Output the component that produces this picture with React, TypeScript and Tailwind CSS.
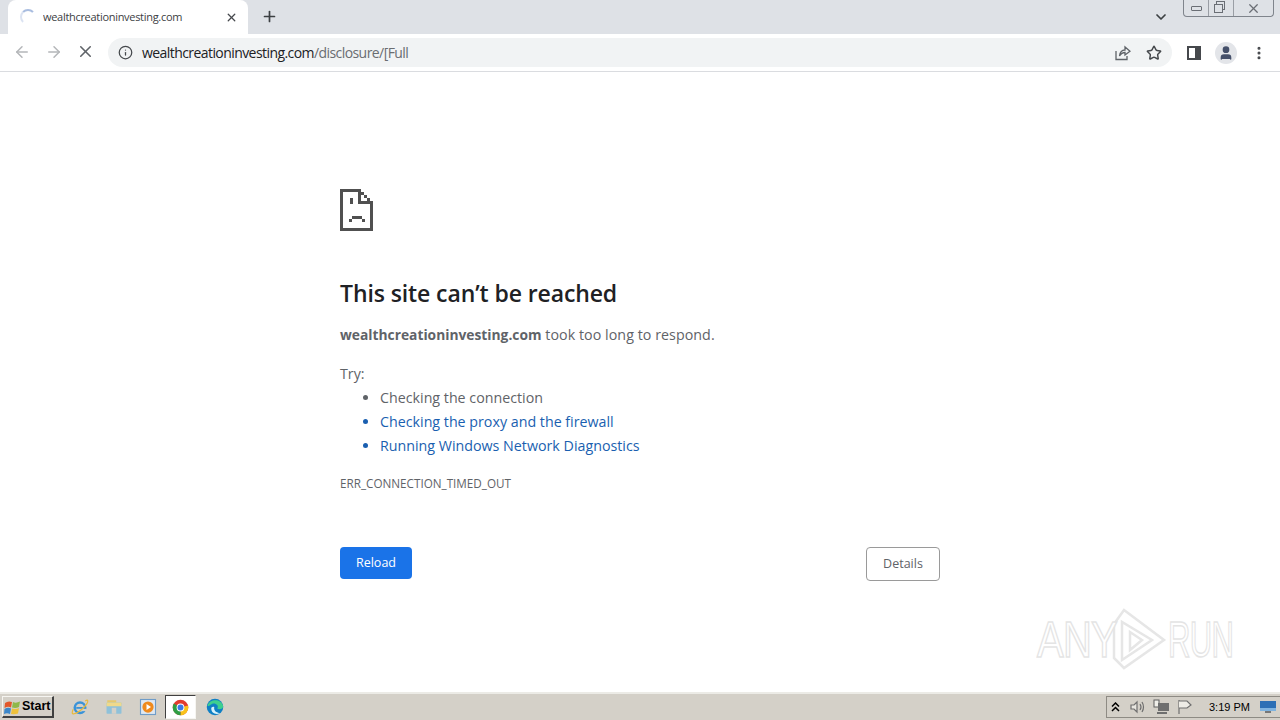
import { ArrowLeft, ArrowRight, X, Plus, ChevronDown, Info, Star, MoreVertical, User } from "lucide-react";

const FONT = "font-['Open_Sans','Noto_Sans',sans-serif]";

function SadPage() {
  return (
    <svg width="33" height="42" viewBox="0 0 33 42" fill="#505050" shapeRendering="crispEdges">
      <rect x="0" y="0" width="21" height="3" />
      <rect x="0" y="0" width="3" height="42" />
      <rect x="0" y="39" width="33" height="3" />
      <rect x="30" y="12" width="3" height="30" />
      <rect x="18" y="0" width="3" height="15" />
      <rect x="18" y="12" width="15" height="3" />
      <rect x="21" y="3" width="3" height="3" />
      <rect x="24" y="6" width="3" height="3" />
      <rect x="27" y="9" width="3" height="3" />
      <rect x="10" y="9" width="3" height="6" />
      <rect x="12" y="27" width="10" height="3" />
      <rect x="9" y="30" width="3" height="3" />
      <rect x="22" y="30" width="3" height="3" />
    </svg>
  );
}

function ShareIcon() {
  return (
    <svg width="17" height="16" viewBox="0 0 17 16" fill="none" stroke="#5f6368" strokeWidth="1.3">
      <path d="M2 6 V14.5 H13 V11" />
      <path d="M5.5 11 C6 7 8.5 5 11 5 V2 L16 6.2 L11 10 V7.5 C9 7.5 7 8.5 5.5 11 Z" />
    </svg>
  );
}

function ChromeIcon({ size = 18 }: { size?: number }) {
  return (
    <svg width={size} height={size} viewBox="0 0 24 24">
      <circle cx="12" cy="12" r="11" fill="#e33b2e" />
      <path d="M12 12 L22.5 9 A11 11 0 0 1 12 23 Z" fill="#f9c21a" />
      <path d="M12 12 L12 23 A11 11 0 0 1 2.5 6.5 Z" fill="#2f9e44" />
      <circle cx="12" cy="12" r="5.5" fill="#fff" />
      <circle cx="12" cy="12" r="4.2" fill="#3b78e7" />
    </svg>
  );
}

function EdgeIcon() {
  return (
    <svg width="18" height="18" viewBox="0 0 24 24">
      <circle cx="12" cy="12" r="11" fill="#0f7fc4" />
      <path d="M2 10 C5 1 20 0 23 11 C23 15 17 16 15 14 C18 10 12 6 8 8 C4 10 3 12 2 10 Z" fill="#3ecf8e" />
      <path d="M7 14 C7 20 13 23 19 20 C14 20 10 17 11 12 C9 11 7 12 7 14 Z" fill="#d8f2fb" />
    </svg>
  );
}

function IeIcon() {
  return (
    <svg width="18" height="18" viewBox="0 0 24 24" fill="none">
      <circle cx="12" cy="13" r="7" stroke="#3a93d8" strokeWidth="3.4" />
      <rect x="7" y="12" width="10" height="2.4" fill="#3a93d8" />
      <rect x="15" y="14.5" width="6" height="3" fill="#d4d0c8" />
      <path d="M19 4 C22 2 23 3 22 6 C20 11 10 20 4 21 C1 22 1 19 3 15" stroke="#e8b93a" strokeWidth="1.6" />
    </svg>
  );
}

function FolderIcon() {
  return (
    <svg width="18" height="18" viewBox="0 0 24 24">
      <rect x="3" y="3" width="12" height="5" fill="#e6c86e" />
      <rect x="2" y="6" width="20" height="15" rx="1" fill="#8fc1d9" />
      <rect x="2" y="6" width="20" height="5" fill="#f0d98a" />
      <rect x="9" y="13" width="6" height="8" fill="#d4d0c8" />
    </svg>
  );
}

function MediaIcon() {
  return (
    <svg width="18" height="18" viewBox="0 0 24 24">
      <rect x="2" y="2" width="20" height="20" fill="#dfe8f2" stroke="#6f9cc8" strokeWidth="1.5" />
      <circle cx="12" cy="12" r="7.5" fill="#ef8a1d" />
      <path d="M10 8 L16 12 L10 16 Z" fill="#fff" />
    </svg>
  );
}

function StartFlag() {
  return (
    <svg width="17" height="16" viewBox="0 0 17 16">
      <path d="M1 4 Q4 1.5 8 3 L7 8.5 Q4 7 0.5 9 Z" fill="#e2572b" />
      <path d="M9 3 Q12 4.5 16 2.5 L15 8 Q12 9.5 8 8.5 Z" fill="#8fb84a" />
      <path d="M0.5 10 Q4 8 7 9.5 L6 15 Q3 13.5 0 15 Z" fill="#3b86c9" />
      <path d="M8 9.5 Q12 10.5 15 9 L14 14.5 Q11 15.5 7 15 Z" fill="#eec13a" />
    </svg>
  );
}

function Watermark() {
  return (
    <div className="absolute left-[1037px] top-[608px] flex items-center pointer-events-none select-none">
      <span className="font-['Liberation_Sans',sans-serif] text-[50px] leading-none scale-x-[0.8] origin-left w-[71px] text-white [-webkit-text-stroke:1.5px_#e4e4e4] tracking-[-1px]">ANY</span>
      <svg width="60" height="64" viewBox="0 0 60 64" fill="none" stroke="#e6e6e6" strokeWidth="2.5">
        <path d="M6 16 L16 2 L56 32 L16 60 L6 50 Z" />
        <path d="M14 14 L14 52 L44 32 Z" />
        <path d="M22 24 L22 42 L34 32 Z" />
      </svg>
      <span className="font-['Liberation_Sans',sans-serif] text-[50px] leading-none scale-x-[0.62] origin-left w-[66px] text-white [-webkit-text-stroke:1.5px_#e4e4e4] tracking-[-1px]">RUN</span>
    </div>
  );
}

export default function App() {
  return (
    <div className={`relative w-[1280px] h-[720px] overflow-hidden flex flex-col bg-white ${FONT}`}>
      {/* Tab strip */}
      <div className="h-[34px] bg-[#dee1e6] flex items-end pl-2 relative shrink-0">
        <div className="w-[240px] h-[34px] bg-white rounded-t-lg flex items-center pl-[12px] pr-[10px]">
          <div className="w-[16px] h-[16px] rounded-full border-2 border-transparent border-t-[#a9bde0] border-l-[#dbe3f2]" />
          <span className="ml-[7px] text-[11px] tracking-[-0.3px] text-[#3c4043] flex-1 truncate">wealthcreationinvesting.com</span>
          <X size={13} strokeWidth={2.4} className="text-[#45484c]" />
        </div>
        <div className="h-[34px] flex items-center ml-[13px]">
          <Plus size={17} strokeWidth={2.4} className="text-[#3c4043] mb-[2px]" />
        </div>
        <ChevronDown size={16} strokeWidth={2.6} className="absolute left-[1153px] top-[9px] text-[#3c4043]" />
        {/* Window controls */}
        <div className="absolute left-[1183px] top-0 w-[91px] h-[17px] flex border border-t-0 border-[#7f848c] rounded-b-[4px] text-[#6a6e75]">
          <div className="w-[25px] flex items-center justify-center border-r border-[#9a9ea5]">
            <div className="w-[11px] h-[5px] border border-[#6a6e75] rounded-[1px]" />
          </div>
          <div className="w-[25px] flex items-center justify-center border-r border-[#9a9ea5] relative">
            <div className="w-[9px] h-[9px] border border-[#6a6e75] absolute left-[7px] top-[1px]" />
            <div className="w-[9px] h-[9px] border border-[#6a6e75] bg-[#dee1e6] absolute left-[5px] top-[4px]" />
          </div>
          <div className="flex-1 flex items-center justify-center">
            <X size={15} strokeWidth={2} />
          </div>
        </div>
      </div>

      {/* Toolbar */}
      <div className="h-[38px] bg-white border-b border-[#dadce0] flex items-center shrink-0">
        <div className="w-[108px] flex items-center pl-[13px] gap-[14px] shrink-0">
          <ArrowLeft size={18} className="text-[#b4b6b9] mb-[2px]" />
          <ArrowRight size={18} className="text-[#b4b6b9] mb-[2px]" />
          <X size={19} className="text-[#5f6368] ml-[-1px] mb-[2px]" />
        </div>
        <div className="w-[1064px] h-[29px] bg-[#f1f3f4] rounded-full flex items-center pl-[10px] pr-[9px] shrink-0">
          <Info size={15} className="text-[#45484c]" />
          <span className="ml-[9px] text-[14px] tracking-[-0.57px] text-[#202124] flex-1">
            wealthcreationinvesting.com<span className="text-[#6a6d71]">/disclosure/[Full</span>
          </span>
          <div className="mr-[15px]"><ShareIcon /></div>
          <Star size={16} strokeWidth={2.2} className="text-[#45484c] mr-[1px]" />
        </div>
        <div className="flex-1 flex items-center pl-[15px] relative">
          <div className="w-[14px] h-[14px] border-2 border-[#45484c] border-r-[6px] shrink-0" />
          <div className="ml-[14px] w-[22px] h-[22px] rounded-full bg-[#e3e5e9] flex items-center justify-center">
            <User size={16} fill="#45506a" className="text-[#45506a]" />
          </div>
          <MoreVertical size={16} strokeWidth={2.6} className="ml-[14px] text-[#45484c]" />
        </div>
      </div>

      {/* Error page */}
      <main className="flex-1 pl-[340px] pt-[117px] relative">
        <div className="w-[600px] flex flex-col">
          <SadPage />
          <h1 className="mt-[46px] text-[23px] leading-[32px] font-semibold text-[#202124] tracking-[-0.1px]">This site can’t be reached</h1>
          <p className="mt-[14px] text-[14.25px] leading-[24px] text-[#5f6368] tracking-[0.05px]">
            <span className="font-bold text-[13.8px] tracking-normal">wealthcreationinvesting.com</span> took too long to respond.
          </p>
          <p className="mt-[15px] text-[14.25px] leading-[24px] text-[#5f6368]">Try:</p>
          <ul className="list-disc pl-[40px] text-[14.25px] leading-[24px] text-[#5f6368]">
            <li>Checking the connection</li>
            <li className="text-[#1a5fb0]">Checking the proxy and the firewall</li>
            <li className="text-[#1a5fb0]">Running Windows Network Diagnostics</li>
          </ul>
          <div className="mt-[17px] text-[11.7px] leading-[16px] text-[#5f6368]">ERR_CONNECTION_TIMED_OUT</div>
          <div className="mt-[56px] flex items-start justify-between">
            <button className="w-[72px] h-[32px] pt-[1px] bg-[#1a73e8] rounded-[4px] text-white text-[12.5px]">Reload</button>
            <button className="w-[74px] h-[34px] bg-white border border-[#9a9a9a] rounded-[4px] text-[#5f6368] text-[12.5px]">Details</button>
          </div>
        </div>
        <div className="absolute left-0 top-[-72px]">
          <Watermark />
        </div>
      </main>

      {/* Taskbar */}
      <div className="h-[28px] bg-[#d4d0c8] border-t-2 border-t-[#ecebe6] flex items-center shrink-0">
        <div className="ml-[2px] w-[52px] h-[22px] bg-[#d4d0c8] border border-[#f6f5f1] border-r-[#404040] border-b-[#404040] border-r-2 border-b-2 flex items-center pl-[1px] gap-[1px]">
          <StartFlag />
          <span className="font-['Liberation_Sans',sans-serif] font-bold text-[12.5px] text-black leading-none">Start</span>
        </div>
        <div className="ml-[17px] flex items-center">
          <IeIcon />
          <div className="ml-[16px]"><FolderIcon /></div>
          <div className="ml-[16px]"><MediaIcon /></div>
          <div className="ml-[8px] w-[31px] h-[24px] bg-white border border-[#404040] border-r-[#f6f5f1] border-b-[#f6f5f1] flex items-center justify-center">
            <ChromeIcon size={17} />
          </div>
          <div className="ml-[10px]"><EdgeIcon /></div>
        </div>
        <div className="ml-auto mr-0 w-[174px] h-[22px] border border-[#8e8b84] border-r-0 flex items-center relative">
          <svg className="ml-[4px]" width="9" height="10" viewBox="0 0 9 10" fill="none" stroke="#000" strokeWidth="1.5">
            <path d="M1 4.5 L4.5 1 L8 4.5" />
            <path d="M1 9 L4.5 5.5 L8 9" />
          </svg>
          <svg className="ml-[9px]" width="17" height="16" viewBox="0 0 17 16" fill="none" stroke="#6f6f6f" strokeWidth="1.2">
            <path d="M2 6 H5 L8 3 V13 L5 10 H2 Z" fill="#e8e6e0" />
            <path d="M11 5 Q13 8 11 11" />
            <path d="M13 3 Q16 8 13 13" />
          </svg>
          <svg className="ml-[7px]" width="17" height="16" viewBox="0 0 17 16">
            <rect x="1" y="1" width="5" height="7" fill="#f0efe9" stroke="#5f5f5f" />
            <rect x="5" y="4" width="11" height="8" fill="#6f6f6f" />
            <rect x="4" y="13" width="10" height="2" fill="#6f6f6f" />
          </svg>
          <svg className="ml-[7px]" width="16" height="16" viewBox="0 0 16 16" fill="none" stroke="#6f6f6f" strokeWidth="1.2">
            <path d="M2 1 V15" />
            <path d="M2 2 H10 L14 6 L10 9 H2" fill="#eeece6" />
          </svg>
          <span className="ml-[16px] font-['Liberation_Sans',sans-serif] text-[11px] text-black leading-none">3:19 PM</span>
          <svg className="absolute right-[4px] top-[4px]" width="16" height="13" viewBox="0 0 16 13">
            <rect x="0" y="0" width="16" height="10" fill="#2c6fb5" />
            <rect x="0" y="7" width="16" height="3" fill="#7fb3df" />
            <rect x="5" y="10" width="6" height="2" fill="#777" />
          </svg>
        </div>
      </div>
    </div>
  );
}
